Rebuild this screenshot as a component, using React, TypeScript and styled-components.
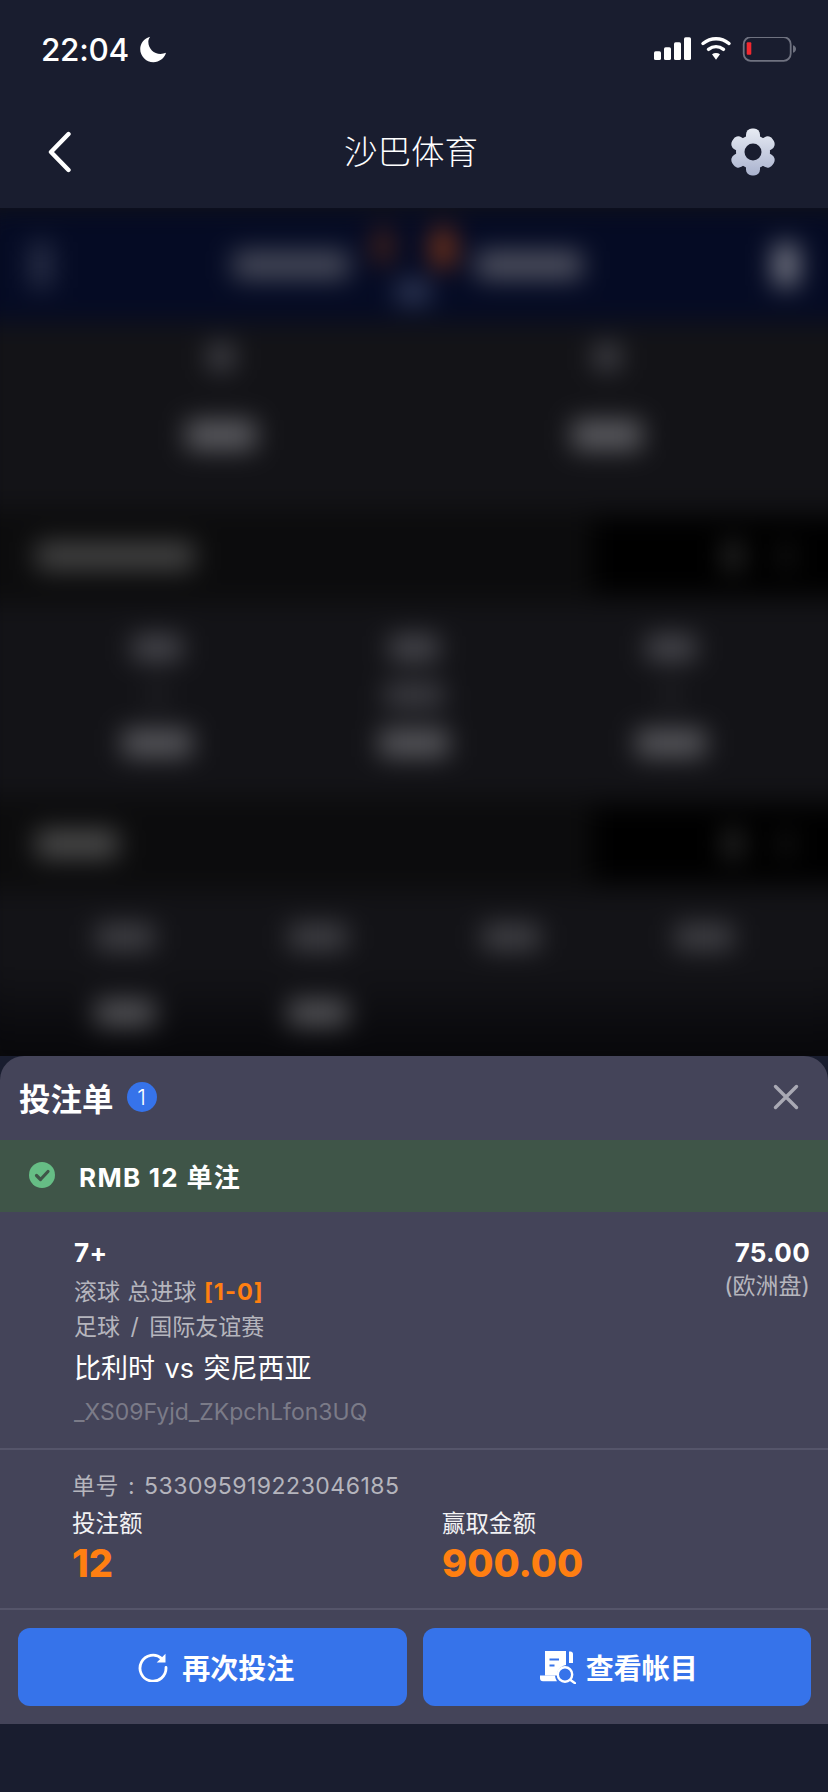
import React from 'react';
import styled, { createGlobalStyle } from 'styled-components';

const GlobalStyle = createGlobalStyle`
  html, body { margin: 0; padding: 0; background: #191d2f; }
  * { box-sizing: border-box; }
`;

const FONT = `Inter, "Noto Sans CJK SC", "Noto Sans", sans-serif`;

const Page = styled.div`
  width: 828px;
  height: 1792px;
  display: flex;
  flex-direction: column;
  background: #191d2f;
  font-family: ${FONT};
  overflow: hidden;
`;

const TopBar = styled.header`
  height: 208px;
  flex: none;
  display: flex;
  flex-direction: column;
  background: #191d2f;
`;

const StatusBar = styled.div`
  height: 100px;
  padding: 26px 30px 0 41px;
  display: flex;
  align-items: flex-start;
  justify-content: space-between;
`;

const Clock = styled.div`
  display: flex;
  align-items: center;
  gap: 11px;
  height: 46px;
  color: #fff;
  font-family: Inter, sans-serif;
  font-size: 31.5px;
  font-weight: 500;
  letter-spacing: -0.3px;
`;

const StatusIcons = styled.svg`
  display: block;
  margin-top: 11px;
`;

const NavBar = styled.nav`
  height: 108px;
  padding: 0 52px 4px 46px;
  display: grid;
  grid-template-columns: 1fr auto 1fr;
  align-items: center;
`;

const NavEnd = styled.div`
  display: flex;
  justify-content: flex-end;
`;

const NavStart = styled.div`
  display: flex;
  justify-content: flex-start;
`;

const NavTitle = styled.div`
  color: #fff;
  font-size: 33.5px;
  font-weight: 300;
  line-height: 40px;
`;

const Backdrop = styled.div`
  height: 848px;
  flex: none;
  overflow: hidden;
  background: #131317;
`;

const BlurLayer = styled.div`
  height: 868px;
  display: flex;
  flex-direction: column;
  filter: blur(13px);
  margin: 0 -20px;
  padding: 0 20px;
  background: linear-gradient(#131317 88%, #08080b 97%);
`;

const Band = styled.div`
  height: 114px;
  padding: 0 50px;
  display: flex;
  align-items: center;
  justify-content: space-between;
  background: #050b24;
  margin: 0 -20px;
`;

const Pill = styled.div<{ $w: number; $h?: number; $c?: string }>`
  width: ${p => p.$w}px;
  height: ${p => p.$h ?? 22}px;
  background: ${p => p.$c ?? '#55555c'};
  border-radius: 3px;
  flex: none;
`;

const Middle = styled.div`
  display: flex;
  align-items: center;
  gap: 21px;
  margin-right: 11px;
`;

const ScoreBlock = styled.div`
  width: 85px;
  display: flex;
  flex-direction: column;
  align-items: center;
  gap: 14px;
  margin-top: 2px;
`;

const Lamps = styled.div`
  width: 100%;
  display: flex;
  justify-content: space-between;
  padding: 0 1px 0 4px;
`;

const OddsGrid = styled.div<{ $cols: number; $h: number; $top: number }>`
  height: ${p => p.$h}px;
  padding: ${p => p.$top}px 28px 0;
  display: grid;
  grid-template-columns: repeat(${p => p.$cols}, 1fr);
  align-content: start;
  justify-items: center;
`;

const OddsCell = styled.div<{ $gap: number }>`
  display: flex;
  flex-direction: column;
  align-items: center;
  gap: ${p => p.$gap}px;
`;

const SectionHead = styled.div`
  height: 94px;
  margin: 0 -20px;
  padding-left: 56px;
  display: flex;
  align-items: center;
  justify-content: space-between;
  background: #0c0c0d;
`;

const SectionTools = styled.div`
  width: 256px;
  height: 74px;
  padding-right: 56px;
  display: flex;
  align-items: center;
  justify-content: flex-end;
  gap: 38px;
  background: #000;
`;

const Sheet = styled.section`
  height: 668px;
  flex: none;
  background: #444459;
  border-radius: 24px 24px 0 0;
  display: flex;
  flex-direction: column;
`;

const SheetHead = styled.div`
  height: 84px;
  padding: 0 29px 3px 19px;
  display: flex;
  align-items: center;
  justify-content: space-between;
`;

const SheetTitle = styled.div`
  display: flex;
  align-items: center;
  gap: 13px;
  color: #fff;
  font-size: 31.5px;
  font-weight: 700;
`;

const CountBadge = styled.span`
  width: 30px;
  height: 30px;
  border-radius: 50%;
  background: #3673ea;
  color: #fff;
  display: flex;
  align-items: center;
  justify-content: center;
  font-size: 22px;
  font-weight: 300;
`;

const SuccessBar = styled.div`
  height: 72px;
  padding: 0 0 2px 29px;
  display: flex;
  align-items: center;
  gap: 24px;
  background: #3f5548;
  color: #fff;
  font-size: 26px;
  font-weight: 700;
  letter-spacing: 1.3px;
`;

const BetInfo = styled.div`
  height: 236px;
  padding: 24px 18px 0 74px;
  display: flex;
  justify-content: space-between;
  align-items: flex-start;
`;

const BetMain = styled.div`
  display: flex;
  flex-direction: column;
`;

const Selection = styled.div`
  color: #fff;
  font-size: 26px;
  font-weight: 700;
  line-height: 34px;
  letter-spacing: 0.3px;
`;

const Meta = styled.div<{ $top?: number; $ws: number }>`
  color: #b5b5bd;
  font-size: 23px;
  line-height: 35px;
  margin-top: ${p => p.$top ?? 0}px;
  word-spacing: ${p => p.$ws}px;
`;

const Score = styled.span`
  color: #ff7f11;
  font-weight: 700;
  font-size: 23.5px;
  letter-spacing: 1px;
`;

const Teams = styled.div`
  color: #fff;
  font-size: 27px;
  line-height: 40px;
  margin-top: 4px;
  word-spacing: 2px;
`;

const BetId = styled.div`
  color: #7b7b88;
  font-size: 23px;
  line-height: 30px;
  margin-top: 8px;
`;

const OddsCol = styled.div`
  display: flex;
  flex-direction: column;
  align-items: flex-end;
`;

const OddsNote = styled.div`
  color: #b5b5bd;
  font-size: 23px;
  line-height: 32px;
`;

const Divider = styled.div`
  height: 2px;
  flex: none;
  background: #55556a;
`;

const Ticket = styled.div`
  height: 158px;
  padding: 21px 0 0 72px;
  display: flex;
  flex-direction: column;
`;

const TicketNo = styled.div`
  color: #b5b5bd;
  font-size: 23px;
  line-height: 30px;
  letter-spacing: 0.5px;
  word-spacing: 2px;
`;

const Amounts = styled.div`
  display: grid;
  grid-template-columns: 370px 1fr;
  margin-top: 8px;
`;

const Amount = styled.div`
  display: flex;
  flex-direction: column;
`;

const AmountLabel = styled.div`
  color: #f2f2f4;
  font-size: 23.5px;
  line-height: 30px;
`;

const AmountValue = styled.div`
  color: #ff7f11;
  font-size: 38px;
  font-weight: 800;
  line-height: 48px;
`;

const Actions = styled.div`
  padding: 18px 17px 0 18px;
  display: grid;
  grid-template-columns: 1fr 1fr;
  gap: 16px;
`;

const ActionButton = styled.button<{ $gap: number; $inset: number }>`
  height: 78px;
  border: 0;
  border-radius: 12px;
  background: #3673ea;
  color: #fff;
  font-family: ${FONT};
  font-size: 28px;
  font-weight: 700;
  display: flex;
  align-items: center;
  justify-content: center;
  gap: ${p => p.$gap}px;
  padding: 0 0 0 ${p => p.$inset}px;
`;

const BackIcon = () => (
  <svg width="26" height="42" viewBox="0 0 26 42">
    <path d="M22.5 3 5 21l17.5 18" fill="none" stroke="#fff" strokeWidth="4.4" strokeLinecap="round" strokeLinejoin="round" />
  </svg>
);

const GearIcon = () => (
  <svg width="46" height="48" viewBox="0 0 46 48">
    <defs>
      <linearGradient id="gearFill" x1="0" y1="0" x2="0" y2="1">
        <stop offset="0" stopColor="#e8ecf4" />
        <stop offset="1" stopColor="#a9b2ce" />
      </linearGradient>
      <mask id="gearMask">
        <g fill="#fff" transform="translate(23 24)">
          <circle r="17" />
          {[0, 60, 120].map(a => (
            <rect key={a} x="-7" y="-23.5" width="14" height="47" rx="6" transform={`rotate(${a})`} />
          ))}
          <circle r="8.5" fill="#000" />
        </g>
      </mask>
    </defs>
    <rect width="46" height="48" fill="url(#gearFill)" mask="url(#gearMask)" />
  </svg>
);

const MoonIcon = () => (
  <svg width="27" height="27" viewBox="0 0 25 25">
    <path d="M9.4.6C4 2 .2 6.600.2 12.100c0 6.700 5.400 12.200 12.200 12.200 5.500 0 10.200-3.600 11.700-8.700-1.600.7-3.300 1-5 1-6.400 0-11.400-5-11.400-11.300 0-1.600.6-3.300 1.700-4.700z" fill="#fff" />
  </svg>
);

const StatusGlyphs = () => (
  <StatusIcons width="144" height="26" viewBox="0 0 144 26">
    <g fill="#fff">
      <rect x="0" y="14.300" width="7" height="8.700" rx="1.600" />
      <rect x="10" y="10.300" width="7" height="12.700" rx="1.600" />
      <rect x="20" y="5.300" width="7" height="17.700" rx="1.600" />
      <rect x="30" y="0.300" width="7" height="22.700" rx="1.600" />
    </g>
    <g fill="none" stroke="#fff" strokeWidth="3.500" strokeLinecap="round">
      <path d="M49 6.500c7.800-6.300 18.300-6.300 26 0" />
      <path d="M54.500 12.300c4.600-3.500 10.400-3.500 15 0" />
    </g>
    <path d="M58 17.300c2.500-1.800 5.500-1.800 8 0l-4 5.400z" fill="#fff" />
    <rect x="89.700" y="0.200" width="47" height="23.600" rx="7" fill="none" stroke="#6f7280" strokeWidth="1.800" />
    <rect x="92.700" y="5.300" width="4.600" height="12.400" rx="1" fill="#f2282f" />
    <path d="M139 8.300c2 .5 3 2 3 3.700s-1 3.200-3 3.700z" fill="#6f7280" />
  </StatusIcons>
);

const CloseIcon = () => (
  <svg width="26" height="26" viewBox="0 0 26 26">
    <path d="M2.500 2.500l21 21M23.500 2.500l-21 21" stroke="#a9a9b4" strokeWidth="3.400" strokeLinecap="round" />
  </svg>
);

const CheckIcon = () => (
  <svg width="26" height="26" viewBox="0 0 26 26">
    <circle cx="13" cy="13" r="13" fill="#66bd85" />
    <path d="M7.500 13.500l4 4 7.500-8" fill="none" stroke="#3f5548" strokeWidth="3.200" strokeLinecap="round" strokeLinejoin="round" />
  </svg>
);

const RefreshIcon = () => (
  <svg width="30" height="30" viewBox="0 0 30 30">
    <path d="M23.800 6.600A13 13 0 1 0 28 15.500" fill="none" stroke="#fff" strokeWidth="2.800" strokeLinecap="round" />
    <path d="M27.500 1.800v8.800h-8.800z" fill="#fff" />
  </svg>
);

const LedgerIcon = () => (
  <svg width="36" height="34" viewBox="0 0 36 34">
    <path d="M5 1h21v14a10.500 10.500 0 0 0-9 9v1.500H5z" fill="#fff" />
    <path d="M29 1.500h1.500c1.500 0 2.500 1 2.500 2.500v9h-4z" fill="#fff" />
    <path d="M0 25.500h15c.2 2 .8 4 2 5.700H3a3 3 0 0 1-3-3z" fill="#fff" />
    <path d="M9.500 9.500h9.500M9.500 15.500h5" stroke="#3673ea" strokeWidth="2.200" />
    <circle cx="25" cy="24.500" r="7.200" fill="none" stroke="#fff" strokeWidth="2.400" />
    <path d="M30.500 30l4.500 3.200" stroke="#fff" strokeWidth="2.400" strokeLinecap="round" />
  </svg>
);

const BlurredPage = () => (
  <Backdrop>
    <BlurLayer>
      <Band>
        <Pill $w={22} $h={46} $c="#2a3048" />
        <Middle>
          <Pill $w={116} $h={28} $c="#484b5a" />
          <ScoreBlock>
            <Lamps>
              <Pill $w={18} $h={34} $c="#4a2418" />
              <Pill $w={22} $h={38} $c="#7a3518" />
            </Lamps>
            <Pill $w={34} $h={22} $c="#333c5a" />
          </ScoreBlock>
          <Pill $w={106} $h={28} $c="#505260" />
        </Middle>
        <Pill $w={24} $h={42} $c="#7c7e8a" />
      </Band>
      <OddsGrid $cols={2} $h={187} $top={22}>
        {[0, 1].map(i => (
          <OddsCell key={i} $gap={50}>
            <Pill $w={26} $h={26} $c="#44444a" />
            <Pill $w={70} $h={30} $c="#5c5c61" />
          </OddsCell>
        ))}
      </OddsGrid>
      <SectionHead>
        <Pill $w={158} $h={28} $c="#444444" />
        <SectionTools>
          <Pill $w={18} $h={30} $c="#2c2c2c" />
          <Pill $w={12} $h={22} $c="#202020" />
        </SectionTools>
      </SectionHead>
      <OddsGrid $cols={3} $h={194} $top={32}>
        {[0, 1, 2].map(i => (
          <OddsCell key={i} $gap={23}>
            <Pill $w={50} $h={26} $c="#48484e" />
            <Pill $w={i === 1 ? 60 : 14} $h={22} $c={i === 1 ? '#424248' : '#26262a'} />
            <Pill $w={70} $h={28} $c="#58585d" />
          </OddsCell>
        ))}
      </OddsGrid>
      <SectionHead>
        <Pill $w={82} $h={28} $c="#4c4c4c" />
        <SectionTools>
          <Pill $w={18} $h={30} $c="#2c2c2c" />
          <Pill $w={12} $h={22} $c="#202020" />
        </SectionTools>
      </SectionHead>
      <OddsGrid $cols={4} $h={180} $top={33}>
        {[0, 1, 2, 3].map(i => (
          <OddsCell key={i} $gap={50}>
            <Pill $w={58} $h={26} $c="#424247" />
            {i < 2 ? <Pill $w={60} $h={26} $c="#555559" /> : null}
          </OddsCell>
        ))}
      </OddsGrid>
    </BlurLayer>
  </Backdrop>
);

export default function App() {
  return (
    <Page>
      <GlobalStyle />
      <TopBar>
        <StatusBar>
          <Clock>
            22:04
            <MoonIcon />
          </Clock>
          <StatusGlyphs />
        </StatusBar>
        <NavBar>
          <NavStart>
            <BackIcon />
          </NavStart>
          <NavTitle>沙巴体育</NavTitle>
          <NavEnd>
            <GearIcon />
          </NavEnd>
        </NavBar>
      </TopBar>
      <BlurredPage />
      <Sheet>
        <SheetHead>
          <SheetTitle>
            投注单
            <CountBadge>1</CountBadge>
          </SheetTitle>
          <CloseIcon />
        </SheetHead>
        <SuccessBar>
          <CheckIcon />
          RMB 12 单注
        </SuccessBar>
        <BetInfo>
          <BetMain>
            <Selection>7+</Selection>
            <Meta $top={4} $ws={1}>
              滚球 总进球 <Score>[1-0]</Score>
            </Meta>
            <Meta $ws={4}>足球 / 国际友谊赛</Meta>
            <Teams>比利时 vs 突尼西亚</Teams>
            <BetId>_XS09Fyjd_ZKpchLfon3UQ</BetId>
          </BetMain>
          <OddsCol>
            <Selection>75.00</Selection>
            <OddsNote>(欧洲盘)</OddsNote>
          </OddsCol>
        </BetInfo>
        <Divider />
        <Ticket>
          <TicketNo>单号 : 533095919223046185</TicketNo>
          <Amounts>
            <Amount>
              <AmountLabel>投注额</AmountLabel>
              <AmountValue>12</AmountValue>
            </Amount>
            <Amount>
              <AmountLabel>赢取金额</AmountLabel>
              <AmountValue>900.00</AmountValue>
            </Amount>
          </Amounts>
        </Ticket>
        <Divider />
        <Actions>
          <ActionButton $gap={14} $inset={8}>
            <RefreshIcon />
            再次投注
          </ActionButton>
          <ActionButton $gap={10} $inset={4}>
            <LedgerIcon />
            查看帐目
          </ActionButton>
        </Actions>
      </Sheet>
    </Page>
  );
}
